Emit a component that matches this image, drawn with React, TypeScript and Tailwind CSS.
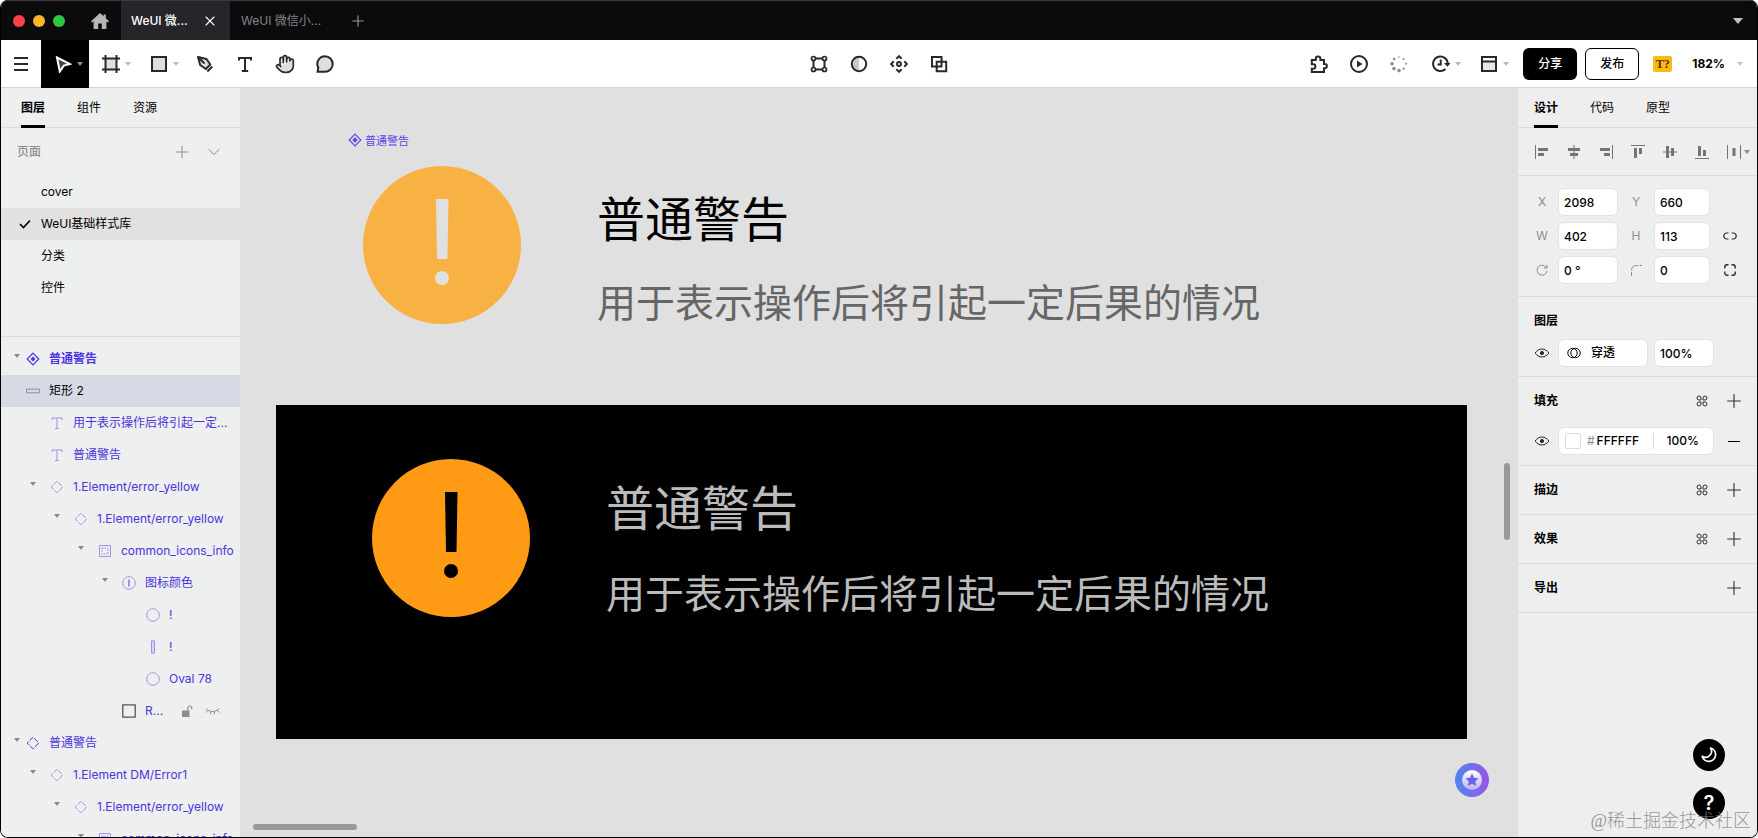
import type { ReactNode } from "react";
import { ChevronDown, Hand, Plus, X } from "lucide-react";

const FONT = "font-['Inter','Noto_Sans_CJK_SC',sans-serif]";

function Caret({ className = "text-[#b5b5b5]" }: { className?: string }) {
  return (
    <svg width="6" height="4" viewBox="0 0 6 4" className={`shrink-0 ${className}`} aria-hidden="true">
      <path d="M0 0h6L3 4z" fill="currentColor" />
    </svg>
  );
}

function Icon({ children, size = 18 }: { children: ReactNode; size?: number }) {
  return (
    <svg
      width={size}
      height={size}
      viewBox="0 0 18 18"
      fill="none"
      stroke="currentColor"
      strokeWidth="2"
      className="shrink-0"
      aria-hidden="true"
    >
      {children}
    </svg>
  );
}

/* ---------- title bar ---------- */

function TitleBar() {
  return (
    <header className="flex h-10 shrink-0 items-center border-t border-[#3a3a3c] bg-[#0b0b0d] text-xs">
      <div className="flex gap-2 pl-3">
        <span className="size-3 rounded-full bg-[#fc4148]" />
        <span className="size-3 rounded-full bg-[#fdb42a]" />
        <span className="size-3 rounded-full bg-[#2bc840]" />
      </div>
      <button aria-label="首页" className="ml-[26px] mr-3 text-[#b6b6b8]">
        <svg width="18" height="16" viewBox="0 0 18 16" fill="currentColor" aria-hidden="true">
          <path d="M9 0 0 8.2l1 1.2 1.6-1V16h4.6v-5.4h3.6V16h4.6V8.400l1.6 1 1-1.200-3.200-2.900V1.600h-2.200v1.700z" />
        </svg>
      </button>
      <div className="flex h-full w-[109px] items-center justify-between bg-[#26252a] pl-2.5 pr-3 text-white">
        <button className="font-medium">WeUI 微...</button>
        <button aria-label="关闭">
          <X size={16} strokeWidth={1.7} />
        </button>
      </div>
      <button className="pl-[11px] text-[#858588]">WeUI 微信小...</button>
      <button aria-label="新建标签" className="ml-7 text-[#98989a]">
        <Plus size={18} strokeWidth={1.5} />
      </button>
      <button aria-label="更多" className="ml-auto mr-3.5 text-[#c4c4c6]">
        <svg width="10" height="6" viewBox="0 0 10 6" aria-hidden="true">
          <path d="M0 0h10L5 6z" fill="currentColor" />
        </svg>
      </button>
    </header>
  );
}

/* ---------- toolbar ---------- */

function Tool({ label, children }: { label: string; children: ReactNode }) {
  return (
    <button aria-label={label} className="flex h-full w-10 items-center justify-center">
      {children}
    </button>
  );
}

function MenuTool({ label, active, children }: { label: string; active?: boolean; children: ReactNode }) {
  return (
    <button
      aria-label={label}
      className={`flex w-12 items-center gap-[5px] pl-[13px] ${active ? "h-12 bg-black text-white" : "h-full"}`}
    >
      {children}
      <Caret className={active ? "text-[#8c8c8c]" : "text-[#b9b9b9]"} />
    </button>
  );
}

const SPINNER_DOTS = [
  [9, 2, 0.8],
  [13.6, 4, 1],
  [16, 8.8, 1],
  [13.6, 13.6, 1.2],
  [9, 15.6, 1.8],
  [4, 13.6, 1.8],
  [2, 8.8, 1.8],
  [4.2, 4, 1.3],
];

function Toolbar() {
  return (
    <div className="z-10 grid h-12 shrink-0 grid-cols-[1fr_auto_1fr] border-b border-[#d6d6d6] bg-white text-[#29292c]">
      <div className="flex">
        <Tool label="菜单">
          <Icon>
            <path d="M2 3h14M2 9h14M2 15h14" />
          </Icon>
        </Tool>
        <MenuTool label="选择" active>
          <Icon>
            <path d="M3 2.500 16 9l-6.200 1.600L5.800 16.500z" fill="#444" />
          </Icon>
        </MenuTool>
        <MenuTool label="容器">
          <Icon>
            <path d="M3.500 3.500h11v11h-11z" fill="#dedede" stroke="none" />
            <path d="M3.500 0v18M14.500 0v18M0 3.500h18M0 14.500h18" />
          </Icon>
        </MenuTool>
        <MenuTool label="矩形">
          <Icon>
            <path d="M2 2h14v14H2z" fill="#dedede" />
          </Icon>
        </MenuTool>
        <Tool label="钢笔">
          <Icon>
            <path d="M2 2l8.500 2 3.800 5.500-4.500 4.500L4.200 10z" fill="#dedede" strokeLinejoin="round" />
            <path d="M2 2l5.500 5.500M16.300 11.500l-5 5" />
            <circle cx="8" cy="8" r="1" fill="currentColor" stroke="none" />
          </Icon>
        </Tool>
        <Tool label="文本">
          <Icon>
            <path d="M3 5.500V3h12v2.500M9 3v13M5.800 16h6.400" />
          </Icon>
        </Tool>
        <Tool label="移动">
          <Hand size={20} strokeWidth={2} fill="#dedede" />
        </Tool>
        <Tool label="评论">
          <Icon>
            <path d="M9 1.300a7.700 7.700 0 1 1 0 15.400H1.600l.7-4A7.700 7.700 0 0 1 9 1.300z" fill="#dedede" />
          </Icon>
        </Tool>
      </div>

      <div className="flex">
        <Tool label="编辑">
          <Icon>
            <path d="M3.500 5v8M14.500 5v8M5 3.500h8M5 14.500h8" />
            <g strokeWidth="1.700" fill="#fff">
              <circle cx="3.500" cy="3.500" r="2" />
              <circle cx="14.500" cy="3.500" r="2" />
              <circle cx="3.500" cy="14.500" r="2" />
              <circle cx="14.500" cy="14.500" r="2" />
            </g>
          </Icon>
        </Tool>
        <Tool label="蒙版">
          <Icon>
            <path d="M9 2a7 7 0 0 0 0 14z" fill="#c8c8c8" stroke="none" />
            <circle cx="9" cy="9" r="7.200" />
          </Icon>
        </Tool>
        <Tool label="创建组件">
          <Icon>
            <circle cx="9" cy="9" r="2" />
            <path d="M6.300 3.700 9 1.200l2.700 2.500M6.300 14.300 9 16.800l2.700-2.500M3.700 6.300 1.200 9l2.500 2.700M14.300 6.300 16.800 9l-2.500 2.700" />
          </Icon>
        </Tool>
        <Tool label="布尔运算">
          <Icon>
            <path d="M2 2h9.500v9.500H2z" />
            <path d="M6.700 6.700h9.500v9.500H6.700z" />
          </Icon>
        </Tool>
      </div>

      <div className="flex items-center justify-end">
        <Tool label="插件">
          <Icon>
            <path d="M1.800 5h4V3.700a2.300 2.300 0 0 1 4.600 0V5H14v4h.8a2 2 0 0 1 0 4.200H14V17H1.800v-3.300h1.400a2.200 2.200 0 0 0 0-4.400H1.800z" />
          </Icon>
        </Tool>
        <Tool label="演示">
          <Icon>
            <circle cx="9" cy="9" r="8" />
            <path d="M7 5.500 12.500 9 7 12.500z" fill="currentColor" stroke="none" />
          </Icon>
        </Tool>
        <Tool label="同步">
          <Icon>
            {SPINNER_DOTS.map(([cx, cy, r]) => (
              <circle key={`${cx}-${cy}`} cx={cx} cy={cy} r={r} fill="#8c8c8c" stroke="none" />
            ))}
          </Icon>
        </Tool>
        <MenuTool label="历史">
          <Icon>
            <path d="M13.500 14A7.300 7.300 0 1 1 15.700 8.500M8.700 4.500v5H5.500" />
            <path d="M12 8h6.500l-3 3.800z" fill="currentColor" stroke="none" />
          </Icon>
        </MenuTool>
        <MenuTool label="布局">
          <Icon>
            <path d="M2 2h14v14H2z" fill="#e6e6e6" />
            <path d="M2 2h14v4.500H2z" fill="#fff" />
          </Icon>
        </MenuTool>
        <button className="ml-2 h-8 w-[54px] rounded-md bg-black text-xs font-medium text-white">分享</button>
        <button className="ml-2 h-8 w-[54px] rounded-md border border-black text-xs font-medium text-black">发布</button>
        <button
          aria-label="缺失字体"
          className="ml-3.5 h-4 w-[19px] rounded-xs bg-[#fdb813] font-['Liberation_Serif',serif] text-xs leading-4 font-bold text-[#4a3500]"
        >
          T?
        </button>
        <button className="ml-5 mr-3.5 flex items-center gap-3 text-xs font-bold text-black">
          182%
          <Caret className="text-[#c4c4c4]" />
        </button>
      </div>
    </div>
  );
}

/* ---------- left panel ---------- */

function Tabs({ items }: { items: string[] }) {
  return (
    <div role="tablist" className="flex h-10 shrink-0 gap-8 border-b border-[#dcdcdc] pl-4 text-xs text-black">
      {items.map((item, i) => (
        <button
          key={item}
          role="tab"
          aria-selected={i === 0}
          className={`h-10 border-y-[3px] border-t-transparent ${i === 0 ? "border-b-black font-bold" : "border-b-transparent"}`}
        >
          {item}
        </button>
      ))}
    </div>
  );
}

type LayerKind = "main" | "rect" | "text" | "instance" | "frame" | "group" | "oval" | "bar" | "square";

type Layer = { name: string; kind: LayerKind; level: number; open?: boolean; tone?: string; locked?: boolean };

const LAYERS: Layer[] = [
  { name: "普通警告", kind: "main", level: 0, open: true, tone: "font-bold text-[#4a34e6]" },
  { name: "矩形 2", kind: "rect", level: 0, tone: "bg-[#d5dae5] text-black" },
  { name: "用于表示操作后将引起一定...", kind: "text", level: 1 },
  { name: "普通警告", kind: "text", level: 1 },
  { name: "1.Element/error_yellow", kind: "instance", level: 1, open: true },
  { name: "1.Element/error_yellow", kind: "instance", level: 2, open: true },
  { name: "common_icons_info", kind: "frame", level: 3, open: true },
  { name: "图标颜色", kind: "group", level: 4, open: true },
  { name: "!", kind: "oval", level: 5 },
  { name: "!", kind: "bar", level: 5 },
  { name: "Oval 78", kind: "oval", level: 5 },
  { name: "R...", kind: "square", level: 4, locked: true },
  { name: "普通警告", kind: "instance", level: 0, open: true },
  { name: "1.Element DM/Error1", kind: "instance", level: 1, open: true },
  { name: "1.Element/error_yellow", kind: "instance", level: 2, open: true },
  { name: "common_icons_info", kind: "frame", level: 3, open: true },
];

const INDENT = ["pl-[13px]", "pl-[29px]", "pl-[53px]", "pl-[77px]", "pl-[101px]", "pl-[125px]"];

const KIND_ICON: Record<LayerKind, ReactNode> = {
  main: (
    <g stroke="#4a34e6">
      <path d="M7 1.200 12.800 7 7 12.800 1.200 7z" strokeWidth="1.200" />
      <path d="M7 4.500 9.500 7 7 9.500 4.500 7z" fill="#4a34e6" stroke="none" />
    </g>
  ),
  rect: <path d="M.5 5.200h13v3.600H.5z" stroke="#8e919c" />,
  text: <path d="M2 4V2h10v2M7 2v10.500M5 12.500h4" />,
  instance: <path d="M7 1.200 12.800 7 7 12.800 1.200 7z" strokeDasharray="5.500 1.200" strokeDashoffset="-1.300" />,
  frame: (
    <>
      <path d="M1.500 1.500h11v11h-11z" />
      <path d="M4 4h6v6H4z" strokeDasharray="1.500 1" />
    </>
  ),
  group: (
    <>
      <circle cx="7" cy="7" r="6.300" />
      <path d="M7 3.500v7" strokeWidth="2" />
    </>
  ),
  oval: <circle cx="7" cy="7" r="6.300" />,
  bar: <path d="M5.500.800h3v12.400h-3z" fill="#d9d4f5" />,
  square: <path d="M.800.800h12.400v12.400H.800z" stroke="#555" strokeWidth="1.300" />,
};

function LayerRow({ layer }: { layer: Layer }) {
  return (
    <li className={`flex h-8 items-center ${INDENT[layer.level]} ${layer.tone ?? "text-[#4a34dd]"}`}>
      <span className={`flex w-2 pb-1.5 ${layer.level === 0 ? "mr-1" : "mr-3"}`}>
        {layer.open && <Caret className="text-[#8a8a8a]" />}
      </span>
      <svg
        width="14"
        height="14"
        viewBox="0 0 14 14"
        fill="none"
        stroke={layer.level === 0 ? "#4a34e6" : "#9d92ee"}
        className="mr-[9px] shrink-0"
        aria-hidden="true"
      >
        {KIND_ICON[layer.kind]}
      </svg>
      <button className="whitespace-nowrap">{layer.name}</button>
      {layer.locked && (
        <span className="ml-auto mr-5 flex items-center gap-3 text-[#8c8c8c]">
          <svg width="12" height="13" viewBox="0 0 12 13" aria-hidden="true">
            <path d="M1 5.500h7.500V12H1z" fill="currentColor" />
            <path d="M6.800 5.500V3a2 2 0 0 1 4 0v1.500" fill="none" stroke="currentColor" strokeWidth="1.200" />
          </svg>
          <svg width="15" height="8" viewBox="0 0 15 8" fill="none" stroke="currentColor" aria-hidden="true">
            <path d="M1 1.500c3.500 4 9.500 4 13 0M2.800 3.200.8 5.500M12.200 3.200l2 2.300M6 4.500l-.6 2.700M9 4.500l.6 2.700" />
          </svg>
        </span>
      )}
    </li>
  );
}

function LeftPanel() {
  return (
    <aside className="flex w-[239px] shrink-0 flex-col overflow-hidden bg-[#eeefef] text-xs">
      <div className="border-[#dcdcdc] bg-[#eeefef] shadow-[inset_0_-1px_0_#dcdcdc]">
        <div className="pl-1">
          <Tabs items={["图层", "组件", "资源"]} />
        </div>
      </div>
      <div className="flex h-12 shrink-0 items-center px-4 text-[#8c8c8c]">
        <h2 className="font-medium">页面</h2>
        <button aria-label="添加页面" className="ml-auto">
          <Plus size={20} strokeWidth={1.2} />
        </button>
        <button aria-label="收起页面" className="ml-3">
          <ChevronDown size={20} strokeWidth={1.2} />
        </button>
      </div>
      <ul className="h-[161px] shrink-0 border-b border-[#dcdcdc] text-black">
        {["cover", "WeUI基础样式库", "分类", "控件"].map((page, i) => (
          <li key={page} className={`flex h-8 items-center pl-[18px] ${i === 1 ? "bg-[#e1e1e1]" : ""}`}>
            <span className="w-[22px]">
              {i === 1 && (
                <svg width="12" height="10" viewBox="0 0 12 10" fill="none" stroke="currentColor" strokeWidth="1.600" aria-hidden="true">
                  <path d="M1 5l3.500 3.500L11 1.500" />
                </svg>
              )}
            </span>
            <button>{page}</button>
          </li>
        ))}
      </ul>
      <ul className="min-h-0 flex-1 overflow-hidden pt-1.5">
        {LAYERS.map((layer, i) => (
          <LayerRow key={i} layer={layer} />
        ))}
      </ul>
    </aside>
  );
}

/* ---------- canvas ---------- */

function Warning({ dark }: { dark?: boolean }) {
  const mark = dark ? "#000" : "#e0e0e0";
  return (
    <div className="flex gap-[76px]">
      <svg width="158" height="158" viewBox="0 0 158 158" className="shrink-0" aria-hidden="true">
        <circle cx="79" cy="79" r="79" fill={dark ? "#fe9a14" : "#f7b243"} />
        <path d="M73 33h12.500l-1 60H74z" fill={mark} />
        <circle cx="79" cy="112" r="7" fill={mark} />
      </svg>
      <div className={`flex flex-col whitespace-nowrap ${dark ? "gap-[30px] pt-[18px] text-[#bbb]" : "gap-7 pt-[22px]"}`}>
        <h3 className={`text-[48px] leading-[56px] ${dark ? "" : "text-black"}`}>普通警告</h3>
        <p className={`text-[39px] leading-[56px] ${dark ? "" : "text-[#666]"}`}>用于表示操作后将引起一定后果的情况</p>
      </div>
    </div>
  );
}

function Canvas() {
  return (
    <main className="relative min-w-0 flex-1 overflow-hidden bg-[#e0e0e0] font-['Noto_Sans_CJK_SC',sans-serif]">
      <div className="absolute top-11 left-[108px] flex items-center gap-[3px] text-[11px] leading-4 text-[#5b48e8]">
        <svg width="14" height="14" viewBox="0 0 14 14" fill="none" aria-hidden="true">
          <path d="M7 1.200 12.800 7 7 12.800 1.200 7z" stroke="currentColor" strokeWidth="1.200" />
          <path d="M7 4.300 9.700 7 7 9.700 4.300 7z" fill="currentColor" />
        </svg>
        普通警告
      </div>
      <div className="absolute top-[78px] left-[123px]">
        <Warning />
      </div>
      <div className="absolute top-[317px] left-9 h-[334px] w-[1191px] bg-black pt-[54px] pl-24">
        <Warning dark />
      </div>
      <span className="absolute top-[375px] right-2 h-[77px] w-1.5 rounded-full bg-[#999]" />
      <span className="absolute bottom-[7px] left-[13px] h-1.5 w-[104px] rounded-full bg-[#999]" />
      <button aria-label="助手" className="absolute right-[29px] bottom-10">
        <svg width="34" height="34" viewBox="0 0 34 34" aria-hidden="true">
          <defs>
            <linearGradient id="assistant" x1="0" y1="0.500" x2="1" y2="0.500">
              <stop offset="0" stopColor="#4d86f0" />
              <stop offset="1" stopColor="#9a55e6" />
            </linearGradient>
            <linearGradient id="assistantInner" x1="0" y1="0" x2="0" y2="1">
              <stop offset="0" stopColor="#fff" />
              <stop offset="1" stopColor="#b9b2f4" />
            </linearGradient>
          </defs>
          <circle cx="17" cy="17" r="17" fill="url(#assistant)" />
          <circle cx="17" cy="17" r="10" fill="url(#assistantInner)" />
          <path
            d="M17 10.500l2 4.200 4.600.6-3.400 3.200.9 4.600-4.100-2.300-4.100 2.300.9-4.600-3.400-3.200 4.600-.6z"
            fill="#6a62e8"
          />
        </svg>
      </button>
    </main>
  );
}

/* ---------- right panel ---------- */

const BOX = "h-7 rounded-md border border-[#e2e2e2] bg-white text-xs font-medium text-black";

const ALIGNMENTS: { label: string; line: string; bars: string }[] = [
  { label: "左对齐", line: "M1.500 1v14", bars: "M4 4h10v3H4zM4 9h6v3H4z" },
  { label: "水平居中", line: "M8 1v14", bars: "M2 4h12v3H2zM4 9h8v3H4z" },
  { label: "右对齐", line: "M14.500 1v14", bars: "M2 4h10v3H2zM6 9h6v3H6z" },
  { label: "顶对齐", line: "M1 1.500h14", bars: "M4 4h3v10H4zM9 4h3v6H9z" },
  { label: "垂直居中", line: "M1 8h14", bars: "M4 2h3v12H4zM9 4h3v8H9z" },
  { label: "底对齐", line: "M1 14.500h14", bars: "M4 2h3v10H4zM9 6h3v6H9z" },
  { label: "分布", line: "M1.500 1v14M14.500 1v14", bars: "M6.500 4h3v8h-3z" },
];

function Field({ id, label, value }: { id: string; label: ReactNode; value: string }) {
  return (
    <>
      <label htmlFor={id} className="flex justify-center text-xs text-[#8e8e8e]">
        {label}
      </label>
      <input id={id} defaultValue={value} className={`${BOX} w-full px-[5px]`} />
    </>
  );
}

function Eye() {
  return (
    <button aria-label="显示或隐藏" className="flex w-8 justify-center text-[#2a2a2a]">
      <svg width="16" height="10" viewBox="0 0 16 10" fill="none" stroke="currentColor" aria-hidden="true">
        <path d="M1.200 5C4.500-.3 11.500-.3 14.800 5 11.500 10.300 4.500 10.300 1.200 5z" />
        <circle cx="8" cy="5" r="1.600" fill="currentColor" />
      </svg>
    </button>
  );
}

function Section({ title, styles, add, children }: { title: string; styles?: boolean; add?: boolean; children?: ReactNode }) {
  return (
    <section className="border-b border-[#dcdcdc] pt-3.5">
      <div className={`flex h-5 items-center pl-4 pr-3 ${children ? "" : "mb-3.5"}`}>
        <h2 className="text-xs font-bold text-black">{title}</h2>
        <div className="ml-auto flex items-center gap-[15px] text-[#2f2f2f]">
          {styles && (
            <button aria-label={`${title}样式`}>
              <svg width="12" height="12" viewBox="0 0 12 12" fill="none" stroke="currentColor" aria-hidden="true">
                <path d="M5 5H3a2 2 0 1 1 2-2zM7 5V3a2 2 0 1 1 2 2zM5 7v2a2 2 0 1 1-2-2zM7 7h2a2 2 0 1 1-2 2z" />
              </svg>
            </button>
          )}
          {add && (
            <button aria-label={`添加${title}`}>
              <Plus size={22} strokeWidth={1.2} />
            </button>
          )}
        </div>
      </div>
      {children}
    </section>
  );
}

function RightPanel() {
  return (
    <aside className="w-[239px] shrink-0 overflow-hidden bg-[#eee]">
      <Tabs items={["设计", "代码", "原型"]} />
      <div className="flex h-12 items-center border-b border-[#dcdcdc] pl-2 text-[#757575]">
        {ALIGNMENTS.map(({ label, line, bars }) => (
          <button key={label} aria-label={label} className="flex w-8 shrink-0 justify-center">
            <svg width="16" height="16" viewBox="0 0 16 16" aria-hidden="true">
              <path d={line} stroke="currentColor" />
              <path d={bars} fill="currentColor" />
            </svg>
          </button>
        ))}
        <Caret className="-ml-1.5 text-[#8a8a8a]" />
      </div>

      <div className="grid grid-cols-[32px_60px_36px_56px_40px] items-center gap-y-1.5 border-b border-[#dcdcdc] py-3 pl-2">
        <Field id="x" label="X" value="2098" />
        <Field id="y" label="Y" value="660" />
        <span />
        <Field id="w" label="W" value="402" />
        <Field id="h" label="H" value="113" />
        <button aria-label="锁定比例" className="flex justify-center text-[#2a2a2a]">
          <svg width="14" height="8" viewBox="0 0 14 8" fill="none" stroke="currentColor" strokeWidth="1.200" aria-hidden="true">
            <path d="M5.500 1H3.800a3 3 0 0 0 0 6h1.700M8.500 1h1.700a3 3 0 0 1 0 6H8.500" />
          </svg>
        </button>
        <Field
          id="rotation"
          value="0 °"
          label={
            <svg width="12" height="12" viewBox="0 0 12 12" fill="none" stroke="currentColor" role="img" aria-label="旋转">
              <path d="M11 7A5 5 0 1 1 9.800 2.800L11 4M11 .8V4H7.800" />
            </svg>
          }
        />
        <Field
          id="radius"
          value="0"
          label={
            <svg width="12" height="12" viewBox="0 0 12 12" fill="none" stroke="currentColor" role="img" aria-label="圆角">
              <path d="M1.500 12V8M1.500 6.500C1.500 3 3.500 1.500 6.500 1.500H8M9.500 1.500H12" />
            </svg>
          }
        />
        <button aria-label="独立圆角" className="flex justify-center text-[#2a2a2a]">
          <svg width="12" height="12" viewBox="0 0 12 12" fill="none" stroke="currentColor" strokeWidth="1.400" aria-hidden="true">
            <path d="M.8 4.500V3A2.200 2.200 0 0 1 3 .8h1.500M7.500.8H9A2.200 2.200 0 0 1 11.200 3v1.500M11.200 7.500V9A2.200 2.200 0 0 1 9 11.200H7.500M4.500 11.200H3A2.200 2.200 0 0 1 .8 9V7.500" />
          </svg>
        </button>
      </div>

      <Section title="图层">
        <div className="flex items-center pt-2 pb-[9px] pl-2">
          <Eye />
          <div className={`${BOX} flex w-[90px] items-center pl-2`}>
            <svg width="14" height="12" viewBox="0 0 14 12" fill="none" stroke="currentColor" aria-hidden="true">
              <circle cx="5.500" cy="6" r="4.700" />
              <circle cx="8.500" cy="6" r="4.700" />
            </svg>
            <select aria-label="混合模式" className="ml-2.5 flex-1 appearance-none outline-none">
              <option>穿透</option>
            </select>
          </div>
          <input aria-label="图层不透明度" defaultValue="100%" className={`${BOX} ml-1.5 w-[60px] px-[5px]`} />
        </div>
      </Section>

      <Section title="填充" styles add>
        <div className="flex items-center pt-4 pb-2.5 pl-2">
          <Eye />
          <div className={`${BOX} flex w-[156px] items-center pl-1.5`}>
            <button aria-label="填充颜色" className="size-4 rounded-xs border border-[#dcdcdc] bg-white" />
            <label htmlFor="fill" className="pr-0.5 pl-1.5 font-normal text-[#8c8c8c]">
              #
            </label>
            <input id="fill" defaultValue="FFFFFF" className="w-14 outline-none" />
            <input
              aria-label="填充不透明度"
              defaultValue="100%"
              className="h-4 w-12 border-l border-[#dcdcdc] pl-[13px] outline-none"
            />
          </div>
          <button aria-label="删除填充" className="mr-[17px] ml-auto flex h-4 items-center">
            <span className="h-px w-3 bg-black" />
          </button>
        </div>
      </Section>

      <Section title="描边" styles add />
      <Section title="效果" styles add />
      <Section title="导出" add />
    </aside>
  );
}

export default function App() {
  return (
    <div className={`relative flex h-screen flex-col overflow-hidden rounded-lg border-x border-b border-black ${FONT}`}>
      <TitleBar />
      <Toolbar />
      <div className="flex min-h-0 flex-1">
        <LeftPanel />
        <Canvas />
        <RightPanel />
      </div>

      <div className="absolute right-8 bottom-[18px] flex flex-col gap-4 text-white">
        <button aria-label="深色模式" className="flex size-8 items-center justify-center rounded-full bg-black">
          <svg width="16" height="16" viewBox="0 0 16 16" fill="none" stroke="currentColor" strokeWidth="1.700" aria-hidden="true">
            <path d="M9.500 1A6.800 6.800 0 1 1 1.200 9.300 6 6 0 0 0 9.500 1z" strokeLinejoin="round" />
          </svg>
        </button>
        <button aria-label="帮助" className="size-8 rounded-full bg-black text-xl leading-8 font-semibold">
          ?
        </button>
      </div>
      <p className="pointer-events-none absolute right-1.5 bottom-0.5 font-['Liberation_Serif','Noto_Sans_CJK_SC',serif] text-[18px] leading-7 font-light text-[#7c7c7c]/80">
        @稀土掘金技术社区
      </p>
    </div>
  );
}
